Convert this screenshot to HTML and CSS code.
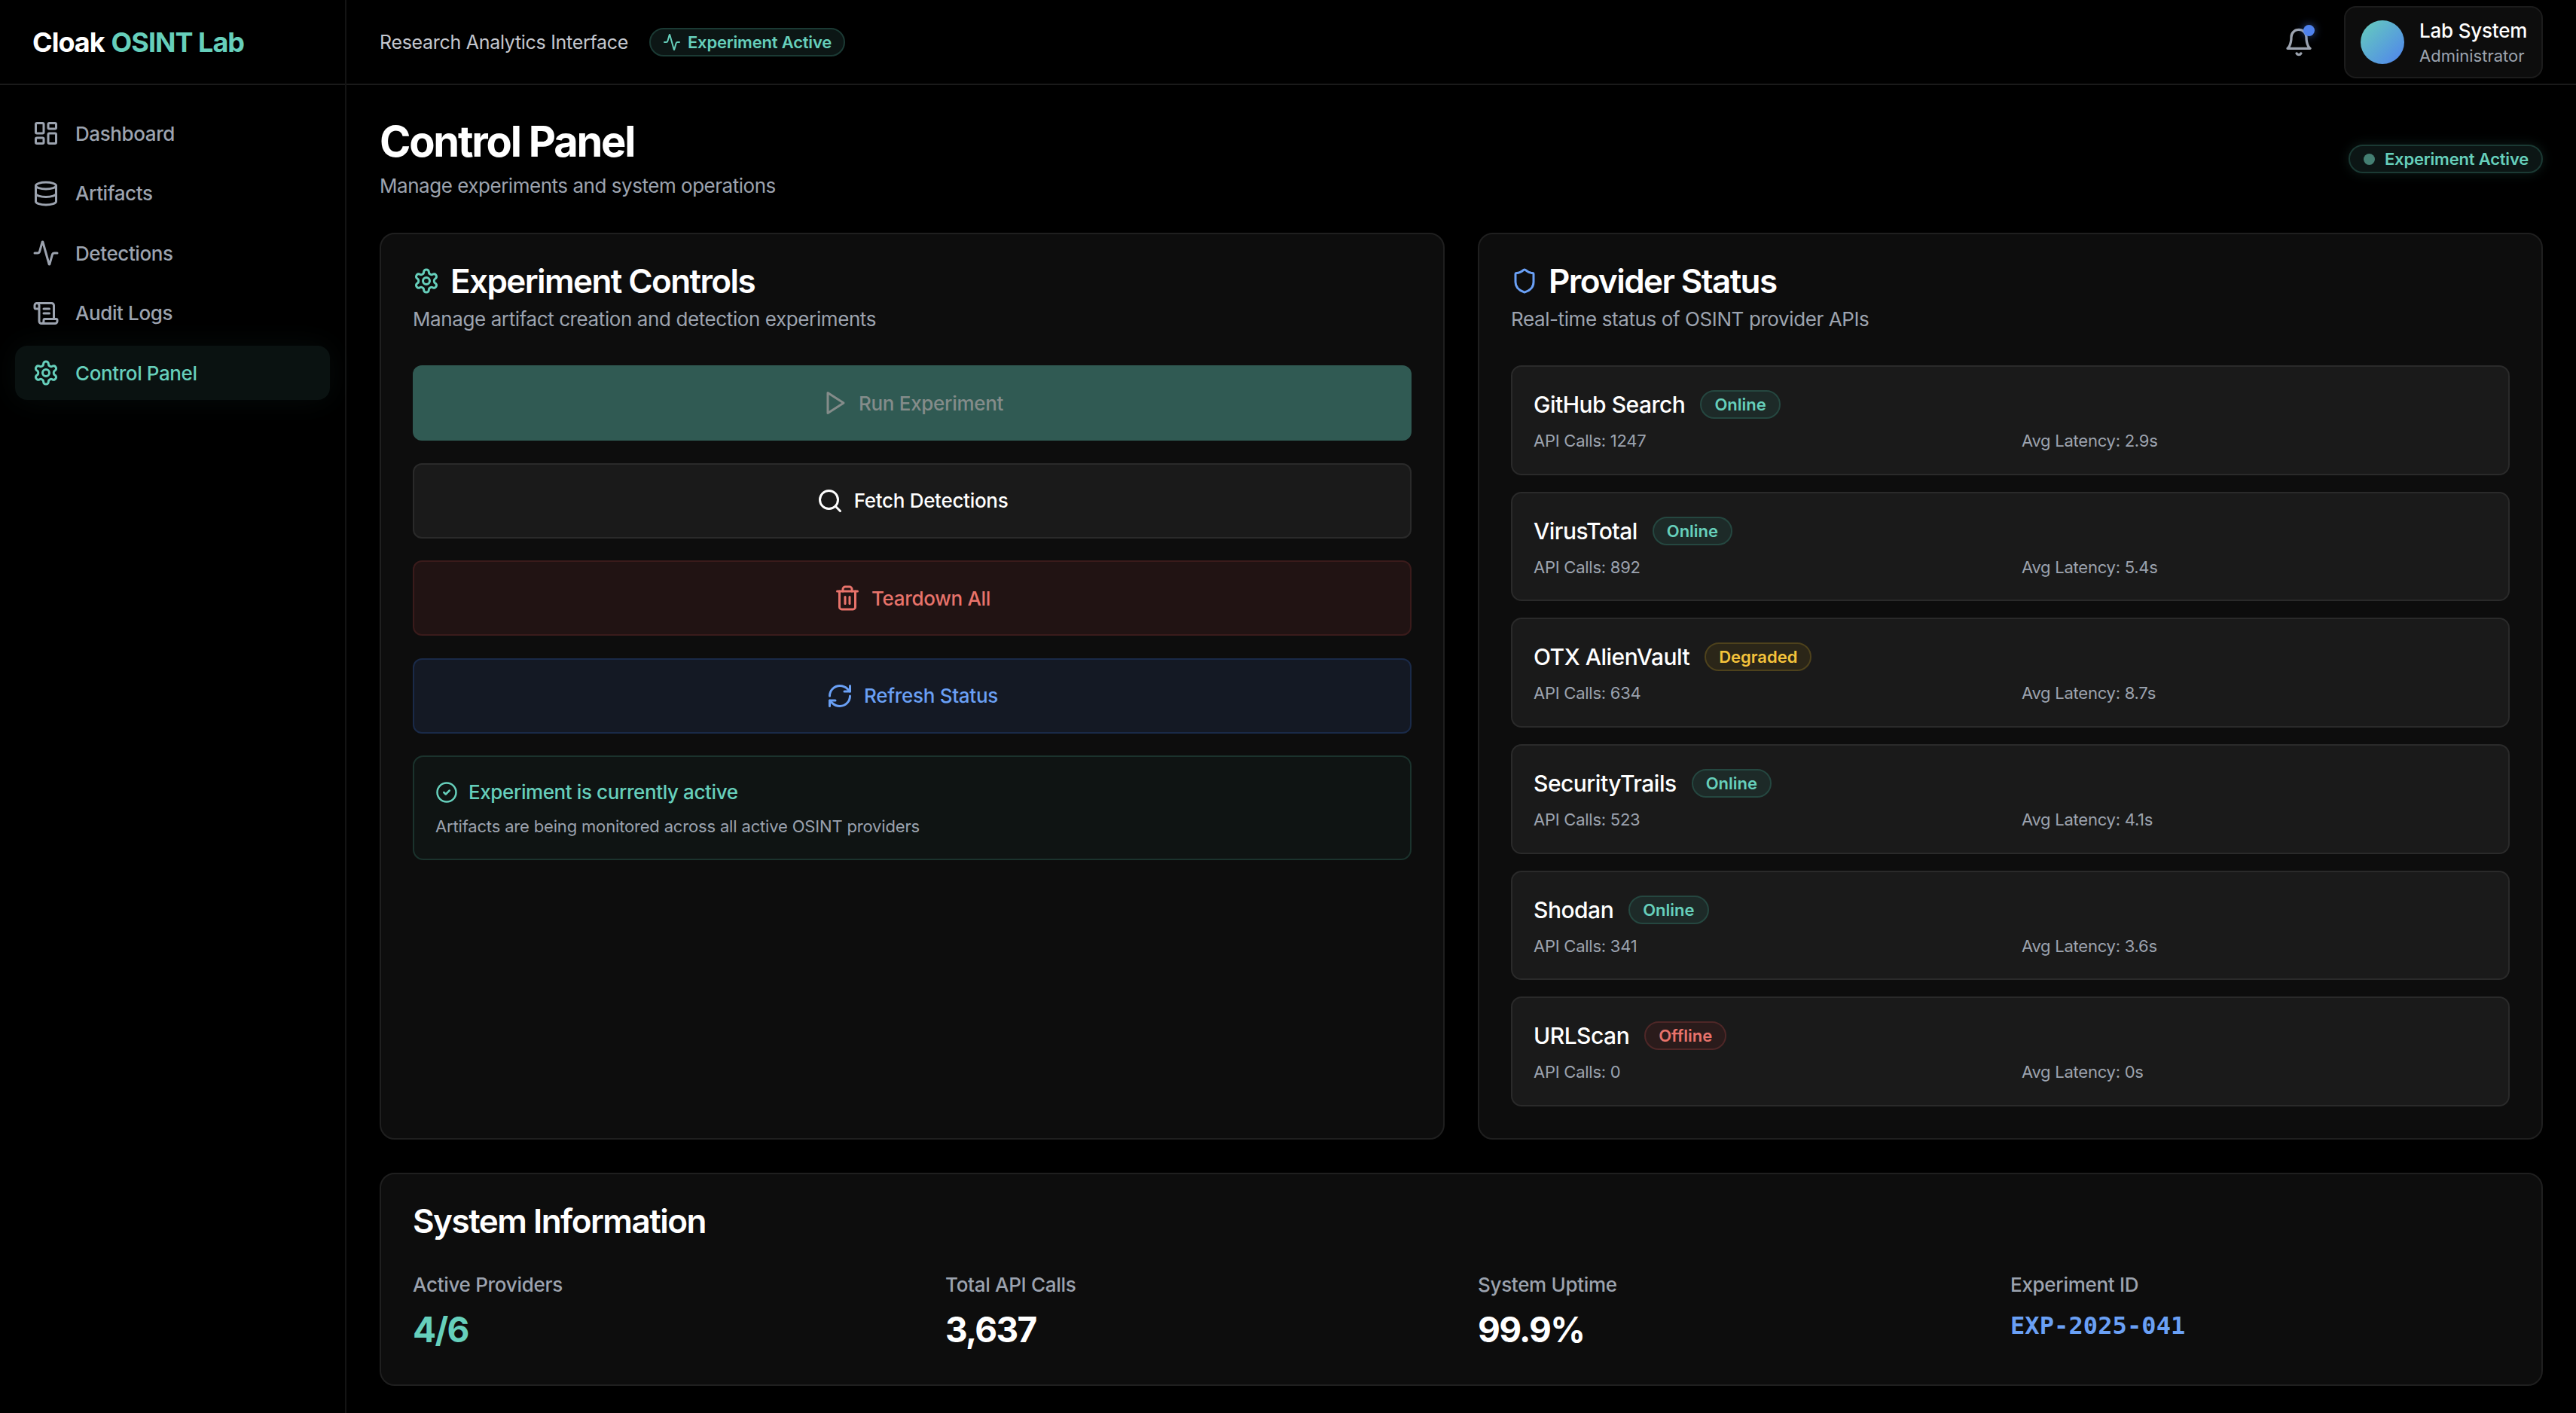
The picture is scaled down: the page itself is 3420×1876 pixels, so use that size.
FILE: index.html
```html
<!DOCTYPE html>
<html lang="en">
<head>
    <meta charset="UTF-8">
    <title>Cloak OSINT Lab</title>
    <link rel="stylesheet" href="styles.css">
</head>

<body>

<!-- Icon sprite -->
<svg class="sprite" xmlns="http://www.w3.org/2000/svg">
    <symbol id="i-dashboard" viewBox="0 0 24 24"><rect x="3" y="3" width="7" height="9" rx="1"/><rect x="14" y="3" width="7" height="5" rx="1"/><rect x="14" y="12" width="7" height="9" rx="1"/><rect x="3" y="16" width="7" height="5" rx="1"/></symbol>
    <symbol id="i-database" viewBox="0 0 24 24"><ellipse cx="12" cy="5" rx="9" ry="3"/><path d="M3 5V19A9 3 0 0 0 21 19V5"/><path d="M3 12A9 3 0 0 0 21 12"/></symbol>
    <symbol id="i-activity" viewBox="0 0 24 24"><path d="M22 12h-2.48a2 2 0 0 0-1.93 1.46l-2.35 8.36a.25.25 0 0 1-.48 0L9.24 2.18a.25.25 0 0 0-.48 0l-2.35 8.36A2 2 0 0 1 4.49 12H2"/></symbol>
    <symbol id="i-scroll" viewBox="0 0 24 24"><path d="M15 12h-5"/><path d="M15 8h-5"/><path d="M19 17V5a2 2 0 0 0-2-2H4"/><path d="M8 21h12a2 2 0 0 0 2-2v-1a1 1 0 0 0-1-1H11a1 1 0 0 0-1 1v1a2 2 0 1 1-4 0V5a2 2 0 1 0-4 0v2a1 1 0 0 0 1 1h3"/></symbol>
    <symbol id="i-settings" viewBox="0 0 24 24"><path d="M12.22 2h-.44a2 2 0 0 0-2 2v.18a2 2 0 0 1-1 1.73l-.43.25a2 2 0 0 1-2 0l-.15-.08a2 2 0 0 0-2.73.73l-.22.38a2 2 0 0 0 .73 2.73l.15.1a2 2 0 0 1 1 1.72v.51a2 2 0 0 1-1 1.74l-.15.09a2 2 0 0 0-.73 2.73l.22.38a2 2 0 0 0 2.73.73l.15-.08a2 2 0 0 1 2 0l.43.25a2 2 0 0 1 1 1.73V20a2 2 0 0 0 2 2h.44a2 2 0 0 0 2-2v-.18a2 2 0 0 1 1-1.73l.43-.25a2 2 0 0 1 2 0l.15.08a2 2 0 0 0 2.73-.73l.22-.39a2 2 0 0 0-.73-2.73l-.15-.08a2 2 0 0 1-1-1.74v-.5a2 2 0 0 1 1-1.74l.15-.09a2 2 0 0 0 .73-2.73l-.22-.38a2 2 0 0 0-2.73-.73l-.15.08a2 2 0 0 1-2 0l-.43-.25a2 2 0 0 1-1-1.73V4a2 2 0 0 0-2-2z"/><circle cx="12" cy="12" r="3"/></symbol>
    <symbol id="i-play" viewBox="0 0 24 24"><polygon points="6 3 20 12 6 21 6 3"/></symbol>
    <symbol id="i-search" viewBox="0 0 24 24"><circle cx="11" cy="11" r="8"/><path d="m21 21-4.3-4.3"/></symbol>
    <symbol id="i-trash" viewBox="0 0 24 24"><path d="M3 6h18"/><path d="M19 6v14c0 1-1 2-2 2H7c-1 0-2-1-2-2V6"/><path d="M8 6V4c0-1 1-2 2-2h4c1 0 2 1 2 2v2"/><line x1="10" y1="11" x2="10" y2="17"/><line x1="14" y1="11" x2="14" y2="17"/></symbol>
    <symbol id="i-refresh" viewBox="0 0 24 24"><path d="M3 12a9 9 0 0 1 9-9 9.75 9.75 0 0 1 6.74 2.74L21 8"/><path d="M21 3v5h-5"/><path d="M21 12a9 9 0 0 1-9 9 9.75 9.75 0 0 1-6.74-2.74L3 16"/><path d="M8 16H3v5"/></symbol>
    <symbol id="i-check" viewBox="0 0 24 24"><circle cx="12" cy="12" r="10"/><path d="m9 12 2 2 4-4"/></symbol>
    <symbol id="i-shield" viewBox="0 0 24 24"><path d="M20 13c0 5-3.5 7.5-7.66 8.95a1 1 0 0 1-.67-.01C7.5 20.5 4 18 4 13V6a1 1 0 0 1 1-1c2 0 4.5-1.2 6.24-2.72a1.17 1.17 0 0 1 1.52 0C14.51 3.81 17 5 19 5a1 1 0 0 1 1 1z"/></symbol>
    <symbol id="i-bell" viewBox="0 0 24 24"><path d="M6 8a6 6 0 0 1 12 0c0 7 3 9 3 9H3s3-2 3-9"/><path d="M10.3 21a1.94 1.94 0 0 0 3.4 0"/></symbol>
</svg>

<div class="app">

    <!-- Sidebar -->
    <aside class="sidebar">
        <div class="logo">Cloak <span class="accent">OSINT Lab</span></div>
        <nav class="nav">
            <a class="nav-item"><svg class="icon nav-icon"><use href="#i-dashboard"/></svg>Dashboard</a>
            <a class="nav-item"><svg class="icon nav-icon"><use href="#i-database"/></svg>Artifacts</a>
            <a class="nav-item"><svg class="icon nav-icon"><use href="#i-activity"/></svg>Detections</a>
            <a class="nav-item"><svg class="icon nav-icon"><use href="#i-scroll"/></svg>Audit Logs</a>
            <a class="nav-item active"><svg class="icon nav-icon"><use href="#i-settings"/></svg>Control Panel</a>
        </nav>
    </aside>

    <div class="content">

        <!-- Top bar -->
        <header class="topbar">
            <div class="topbar-left">
                <span class="topbar-title">Research Analytics Interface</span>
                <span class="pill pill-plain"><svg class="icon pill-icon"><use href="#i-activity"/></svg>Experiment Active</span>
            </div>
            <div class="topbar-right">
                <div class="bell">
                    <svg class="icon bell-icon"><use href="#i-bell"/></svg>
                    <span class="bell-dot"></span>
                </div>
                <div class="user">
                    <span class="avatar"></span>
                    <div class="user-text">
                        <div class="user-name">Lab System</div>
                        <div class="user-role">Administrator</div>
                    </div>
                </div>
            </div>
        </header>

        <main class="main">

            <!-- Page heading -->
            <div class="page-head">
                <div>
                    <h1 class="page-title">Control Panel</h1>
                    <p class="page-sub">Manage experiments and system operations</p>
                </div>
                <span class="pill pill-glow"><span class="pill-dot"></span>Experiment Active</span>
            </div>

            <div class="columns">

                <!-- Experiment controls -->
                <section class="card">
                    <h2 class="card-title"><svg class="icon title-icon accent"><use href="#i-settings"/></svg>Experiment Controls</h2>
                    <p class="card-sub">Manage artifact creation and detection experiments</p>

                    <div class="actions">
                        <button class="btn btn-run" type="button"><svg class="icon btn-icon"><use href="#i-play"/></svg>Run Experiment</button>
                        <button class="btn btn-fetch" type="button"><svg class="icon btn-icon"><use href="#i-search"/></svg>Fetch Detections</button>
                        <button class="btn btn-teardown" type="button"><svg class="icon btn-icon"><use href="#i-trash"/></svg>Teardown All</button>
                        <button class="btn btn-refresh" type="button"><svg class="icon btn-icon"><use href="#i-refresh"/></svg>Refresh Status</button>

                        <div class="notice">
                            <div class="notice-title"><svg class="icon notice-icon"><use href="#i-check"/></svg>Experiment is currently active</div>
                            <p class="notice-text">Artifacts are being monitored across all active OSINT providers</p>
                        </div>
                    </div>
                </section>

                <!-- Provider status -->
                <section class="card">
                    <h2 class="card-title"><svg class="icon title-icon blue"><use href="#i-shield"/></svg>Provider Status</h2>
                    <p class="card-sub">Real-time status of OSINT provider APIs</p>

                    <div class="providers">
                        <div class="provider">
                            <div class="provider-head"><span class="provider-name">GitHub Search</span><span class="tag tag-online">Online</span></div>
                            <div class="provider-meta"><span>API Calls: 1247</span><span>Avg Latency: 2.9s</span></div>
                        </div>
                        <div class="provider">
                            <div class="provider-head"><span class="provider-name">VirusTotal</span><span class="tag tag-online">Online</span></div>
                            <div class="provider-meta"><span>API Calls: 892</span><span>Avg Latency: 5.4s</span></div>
                        </div>
                        <div class="provider">
                            <div class="provider-head"><span class="provider-name">OTX AlienVault</span><span class="tag tag-degraded">Degraded</span></div>
                            <div class="provider-meta"><span>API Calls: 634</span><span>Avg Latency: 8.7s</span></div>
                        </div>
                        <div class="provider">
                            <div class="provider-head"><span class="provider-name">SecurityTrails</span><span class="tag tag-online">Online</span></div>
                            <div class="provider-meta"><span>API Calls: 523</span><span>Avg Latency: 4.1s</span></div>
                        </div>
                        <div class="provider">
                            <div class="provider-head"><span class="provider-name">Shodan</span><span class="tag tag-online">Online</span></div>
                            <div class="provider-meta"><span>API Calls: 341</span><span>Avg Latency: 3.6s</span></div>
                        </div>
                        <div class="provider">
                            <div class="provider-head"><span class="provider-name">URLScan</span><span class="tag tag-offline">Offline</span></div>
                            <div class="provider-meta"><span>API Calls: 0</span><span>Avg Latency: 0s</span></div>
                        </div>
                    </div>
                </section>
            </div>

            <!-- System information -->
            <section class="card sysinfo">
                <h2 class="sys-title">System Information</h2>
                <div class="stats">
                    <div><div class="stat-label">Active Providers</div><div class="stat-value accent">4/6</div></div>
                    <div><div class="stat-label">Total API Calls</div><div class="stat-value">3,637</div></div>
                    <div><div class="stat-label">System Uptime</div><div class="stat-value">99.9%</div></div>
                    <div><div class="stat-label">Experiment ID</div><div class="stat-value stat-mono">EXP-2025-041</div></div>
                </div>
            </section>
        </main>
    </div>
</div>

</body>
</html>
```

FILE: styles.css
```css
/* Page */
* {
    box-sizing: border-box;
}

body {
    margin: 0;
    height: 100vh;
    overflow: hidden;
    background-color: #000000;
    color: #FFFFFF;
    font-family: Inter, "Liberation Sans", sans-serif;
}

.sprite {
    display: none;
}

.icon {
    fill: none;
    stroke: currentColor;
    stroke-width: 2;
    stroke-linecap: round;
    stroke-linejoin: round;
    flex-shrink: 0;
}

.accent {
    color: #66CFBB;
}

.blue {
    color: #6AA0F5;
}

.app {
    display: flex;
    height: 100vh;
}

/* Sidebar */
.sidebar {
    width: 460px;
    flex-shrink: 0;
    border-right: 2px solid #141414;
}

.logo {
    height: 113px;
    padding-left: 43px;
    display: flex;
    align-items: center;
    gap: 9px;
    font-size: 36px;
    font-weight: 700;
    letter-spacing: -1px;
    border-bottom: 2px solid #1A1A1A;
}

.nav {
    display: flex;
    flex-direction: column;
    gap: 7.5px;
    padding: 28px 20px;
}

.nav-item {
    display: flex;
    align-items: center;
    gap: 21px;
    height: 72px;
    padding: 0 23px;
    border-radius: 16px;
    color: #9CA3AF;
    font-size: 26px;
    font-weight: 500;
    letter-spacing: -0.4px;
}

.nav-icon {
    width: 36px;
    height: 36px;
}

.nav-item.active {
    color: #66CFBB;
    background-color: #0A1211;
    box-shadow: 0 0 40px rgba(102, 207, 187, 0.06);
}

/* Top bar */
.content {
    flex: 1;
    min-width: 0;
}

.topbar {
    height: 113px;
    padding: 0 44px;
    display: flex;
    align-items: center;
    justify-content: space-between;
    border-bottom: 2px solid #1A1A1A;
}

.topbar-left,
.topbar-right {
    display: flex;
    align-items: center;
}

.topbar-left {
    gap: 28px;
}

.topbar-right {
    gap: 40px;
}

.topbar-title {
    font-size: 25px;
    letter-spacing: -0.3px;
    color: #C4C7CE;
}

/* Pills */
.pill {
    display: inline-flex;
    align-items: center;
    height: 38px;
    border-radius: 19px;
    border: 2px solid #1B3A34;
    background-color: #0C1615;
    color: #66CFBB;
    font-size: 22px;
    font-weight: 600;
    letter-spacing: -0.2px;
}

.pill-plain {
    padding: 0 16px;
    gap: 9px;
}

.pill-icon {
    width: 24px;
    height: 24px;
}

.pill-glow {
    padding: 0 17px 0 18px;
    gap: 13px;
    margin-bottom: 2px;
    box-shadow: 0 0 16px rgba(102, 207, 187, 0.14);
}

.pill-dot {
    width: 15px;
    height: 15px;
    border-radius: 50%;
    background-color: #447F72;
}

/* Bell and user */
.bell {
    position: relative;
    display: flex;
    color: #9CA3AF;
}

.bell-icon {
    width: 40px;
    height: 40px;
}

.bell-dot {
    position: absolute;
    top: -3px;
    right: -1px;
    width: 15px;
    height: 15px;
    border-radius: 50%;
    background-color: #4F82EE;
    box-shadow: 0 0 12px rgba(79, 130, 238, 0.6);
}

.user {
    width: 264px;
    height: 96px;
    display: flex;
    align-items: center;
    gap: 20px;
    padding: 0 20px;
    border: 2px solid #1C1C1C;
    border-radius: 16px;
    background-color: #0D0D0D;
}

.avatar {
    width: 58px;
    height: 58px;
    border-radius: 50%;
    flex-shrink: 0;
    background: linear-gradient(135deg, #66CFBB, #4F82EE);
}

.user-text {
    white-space: nowrap;
}

.user-name {
    font-size: 26px;
    font-weight: 500;
    line-height: 36px;
    letter-spacing: -0.2px;
}

.user-role {
    font-size: 22px;
    line-height: 30px;
    color: #9CA3AF;
}

/* Main area */
.main {
    padding: 44px 44px 0;
}

.page-head {
    display: flex;
    align-items: center;
    justify-content: space-between;
    margin-bottom: 42px;
}

.page-title {
    margin: 0;
    font-size: 56px;
    font-weight: 700;
    line-height: 62px;
    letter-spacing: -2.2px;
}

.page-sub {
    margin: 8px 0 0;
    font-size: 26px;
    line-height: 40px;
    letter-spacing: -0.47px;
    color: #9CA3AF;
}

.columns {
    display: grid;
    grid-template-columns: 1fr 1fr;
    gap: 44px;
}

/* Cards */
.card {
    padding: 40px 42px 42px;
    border: 2px solid #1F1F1F;
    border-radius: 20px;
    background-color: #0D0D0D;
}

.card-title {
    display: flex;
    align-items: center;
    gap: 14px;
    margin: 0;
    font-size: 44px;
    font-weight: 600;
    line-height: 44px;
    letter-spacing: -1.6px;
}

.title-icon {
    width: 36px;
    height: 36px;
}

.card-sub {
    margin: 11px 0 43px;
    font-size: 26px;
    line-height: 36px;
    letter-spacing: -0.4px;
    color: #9CA3AF;
}

/* Buttons */
.actions {
    display: flex;
    flex-direction: column;
    gap: 29.5px;
}

.btn {
    height: 100px;
    display: flex;
    align-items: center;
    justify-content: center;
    gap: 14px;
    border-radius: 12px;
    border: 2px solid transparent;
    font-family: inherit;
    font-size: 26px;
    font-weight: 500;
    letter-spacing: -0.3px;
}

.btn-icon {
    width: 36px;
    height: 36px;
}

.btn-run {
    background-color: #305A53;
    color: #848C8A;
}

.btn-fetch {
    background-color: #1A1A1A;
    border-color: #2A2A2A;
    color: #FFFFFF;
}

.btn-teardown {
    background-color: #211313;
    border-color: #3A1B1B;
    color: #E8736B;
}

.btn-refresh {
    background-color: #141924;
    border-color: #1A2A48;
    color: #6AA0F5;
}

/* Active notice */
.notice {
    height: 139px;
    padding: 31px 28px;
    border: 2px solid #1B332D;
    border-radius: 14px;
    background-color: #0F1413;
}

.notice-title {
    display: flex;
    align-items: center;
    gap: 14px;
    font-size: 26px;
    font-weight: 500;
    letter-spacing: -0.4px;
    color: #66CFBB;
    line-height: 32px;
}

.notice-icon {
    width: 30px;
    height: 30px;
}

.notice-text {
    margin: 14px 0 0;
    font-size: 22px;
    line-height: 30px;
    letter-spacing: -0.17px;
    color: #9CA3AF;
}

/* Providers */
.providers {
    display: flex;
    flex-direction: column;
    gap: 22px;
}

.provider {
    height: 145.7px;
    padding: 30px 28px 0;
    border: 2px solid #2A2A2A;
    border-radius: 14px;
    background-color: #1A1A1A;
}

.provider-head {
    display: flex;
    align-items: center;
    gap: 20px;
    height: 40px;
}

.provider-name {
    font-size: 30px;
    font-weight: 500;
    letter-spacing: -0.5px;
}

.tag {
    display: inline-flex;
    align-items: center;
    height: 38px;
    padding: 0 17px;
    border-radius: 19px;
    border: 2px solid;
    font-size: 22px;
    font-weight: 600;
}

.tag-online {
    color: #66CFBB;
    background-color: #1D2A28;
    border-color: #254740;
}

.tag-degraded {
    color: #F5C33B;
    background-color: #2B2618;
    border-color: #4E421C;
}

.tag-offline {
    color: #E8736B;
    background-color: #2A1B1B;
    border-color: #4E2727;
}

.provider-meta {
    display: grid;
    grid-template-columns: 1fr 1fr;
    gap: 30px;
    margin-top: 13px;
    font-size: 22px;
    line-height: 30px;
    letter-spacing: -0.25px;
    color: #9CA3AF;
}

/* System information */
.sysinfo {
    margin-top: 44px;
    padding-bottom: 45px;
}

.sys-title {
    margin: 0 0 45px;
    font-size: 44px;
    font-weight: 600;
    line-height: 44px;
    letter-spacing: -1.5px;
}

.stats {
    display: grid;
    grid-template-columns: repeat(4, 1fr);
    gap: 44px;
}

.stat-label {
    font-size: 26px;
    font-weight: 500;
    line-height: 36px;
    letter-spacing: -0.3px;
    color: #9CA3AF;
}

.stat-value {
    margin-top: 13px;
    font-size: 46px;
    font-weight: 700;
    line-height: 56px;
    letter-spacing: -1.7px;
}

.stat-value.accent {
    color: #66CFBB;
}

.stat-mono {
    font-family: "DejaVu Sans Mono", monospace;
    font-size: 32px;
    line-height: 46px;
    letter-spacing: 0.1px;
    color: #6AA0F5;
}
```
